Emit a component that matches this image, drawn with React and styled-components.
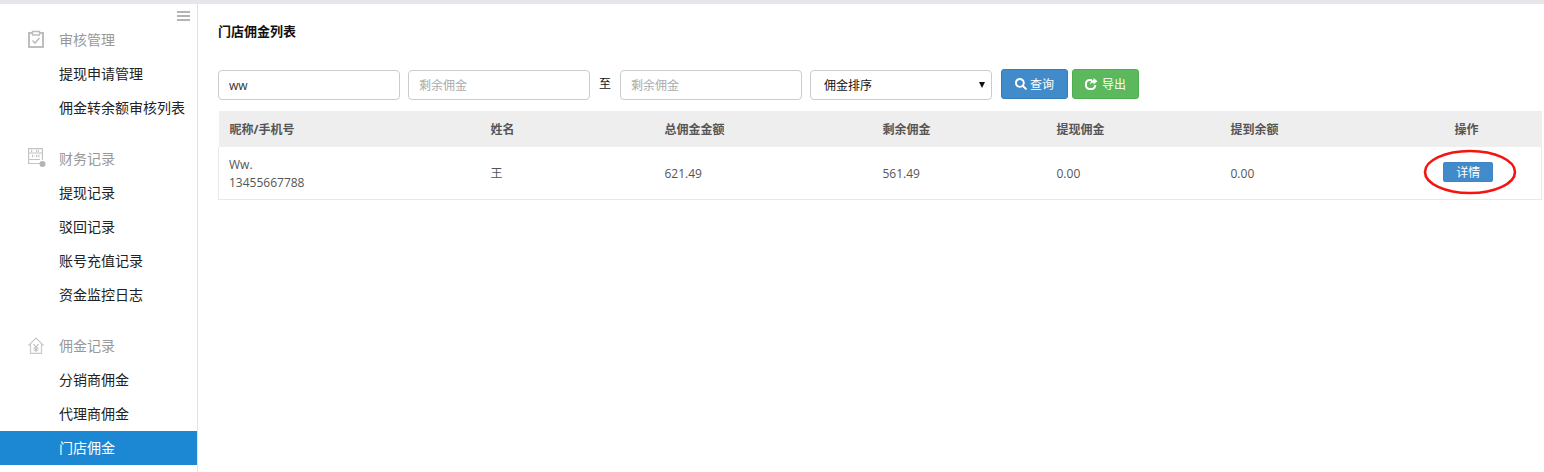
import React from 'react';
import styled, { createGlobalStyle } from 'styled-components';
import { FaSearch } from 'react-icons/fa';

const fontStack = `"Open Sans", "Noto Sans CJK SC", sans-serif`;

const GlobalStyle = createGlobalStyle`
  * { box-sizing: border-box; }
  html, body { margin: 0; padding: 0; background: #fff; }
  body { font-family: ${fontStack}; color: #000; }
`;

const Page = styled.div`
  width: 1544px;
  height: 472px;
  overflow: hidden;
  border-top: 4px solid #e7e7eb;
  display: flex;
`;

const Sidebar = styled.aside`
  width: 198px;
  flex: none;
  padding-top: 19px;
  border-right: 1px solid #e3e3e3;
  position: relative;
`;

const Burger = styled.div`
  position: absolute;
  top: 7px;
  right: 7px;
  width: 13px;
  height: 10px;
  border-top: 2px solid #b3b3b3;
  border-bottom: 2px solid #b3b3b3;
  &::after {
    content: '';
    display: block;
    height: 2px;
    margin-top: 2px;
    background: #b3b3b3;
  }
`;

const Group = styled.div`
  margin-bottom: 17px;
`;

const GroupHead = styled.div`
  height: 34px;
  padding-bottom: 2px;
  display: flex;
  align-items: center;
  font-size: 14px;
  color: #999;
`;

const IconSlot = styled.span`
  width: 59px;
  flex: none;
  padding-left: 28px;
  display: flex;
  align-items: center;
`;

const MenuItem = styled.div`
  height: 34px;
  line-height: 34px;
  padding-left: 59px;
  font-size: 14px;
  color: ${(p) => (p.$active ? '#fff' : '#222')};
  background: ${(p) => (p.$active ? '#1c88d4' : 'transparent')};
`;

const Main = styled.main`
  flex: 1;
  min-width: 0;
  padding: 0 2px 0 20px;
`;

const Title = styled.h1`
  margin: 0;
  padding-top: 18px;
  height: 65px;
  font-size: 13px;
  line-height: 18px;
  font-weight: 700;
  color: #111;
`;

const Toolbar = styled.div`
  display: flex;
  align-items: flex-start;
  height: 32px;
  margin-bottom: 10px;
`;

const Input = styled.input`
  width: 182px;
  height: 30px;
  margin-top: 1px;
  margin-right: 8px;
  padding: 0 10px;
  border: 1px solid #ccc;
  border-radius: 4px;
  outline: none;
  font-family: ${fontStack};
  font-size: 12px;
  color: #333;
  &::placeholder { color: #aaa; opacity: 1; }
`;

const To = styled.span`
  width: 22px;
  margin-left: 1px;
  margin-right: -1px;
  line-height: 30px;
  font-size: 12px;
  color: #111;
`;

const SelectWrap = styled.div`
  position: relative;
  width: 182px;
  height: 30px;
  margin-top: 1px;
  margin-right: 9px;
  &::after {
    content: '';
    position: absolute;
    top: 12px;
    right: 7px;
    border-left: 3.5px solid transparent;
    border-right: 3.5px solid transparent;
    border-top: 6px solid #111;
    pointer-events: none;
  }
`;

const Select = styled.select`
  appearance: none;
  display: block;
  width: 100%;
  height: 100%;
  padding: 0 13px;
  border: 1px solid #ccc;
  border-radius: 4px;
  outline: none;
  background: #fff;
  font-family: ${fontStack};
  font-size: 12px;
  color: #111;
`;

const Button = styled.button`
  width: 67px;
  height: 30px;
  margin-right: 4px;
  padding: 0;
  display: inline-flex;
  align-items: center;
  justify-content: center;
  gap: ${(p) => p.$gap}px;
  border: 1px solid ${(p) => p.$border};
  border-radius: 3px;
  background: ${(p) => p.$bg};
  color: #fff;
  font-family: ${fontStack};
  font-size: 12px;
`;

const Table = styled.table`
  width: 1323px;
  table-layout: fixed;
  border-collapse: collapse;
  font-size: 12px;
  color: #555;
`;

const Th = styled.th`
  width: ${(p) => p.$w}px;
  height: 36px;
  padding: 0 ${(p) => (p.$center ? 13 : 11)}px 0 11px;
  background: #eee;
  font-weight: 700;
  text-align: ${(p) => (p.$center ? 'center' : 'left')};
  color: #555;
`;

const Td = styled.td`
  height: 52px;
  padding: 2px 11px 0;
  line-height: 18px;
  border-bottom: 1px solid #e8e8e8;
  text-align: ${(p) => (p.$center ? 'center' : 'left')};
  &:first-child { border-left: 1px solid #e8e8e8; padding-left: 10px; }
  &:last-child { border-right: 1px solid #e8e8e8; padding-top: 0; }
`;

const ActionWrap = styled.div`
  position: relative;
  display: inline-block;
  vertical-align: middle;
  margin-left: 2px;
  margin-top: -1px;
`;

const DetailButton = styled.button`
  display: block;
  width: 50px;
  height: 20px;
  padding: 0;
  border: 1px solid #3f86c4;
  border-radius: 2px;
  background: #428bca;
  color: #fff;
  font-family: ${fontStack};
  font-size: 12px;
`;

const Ring = styled.svg`
  position: absolute;
  left: -20px;
  top: -13px;
  pointer-events: none;
`;

const ClipboardIcon = () => (
  <svg width="16" height="18" viewBox="0 0 16 18" fill="none" stroke="#bdbdbd">
    <path d="M4.5 3H1v14h14V3h-3.5" strokeWidth="2" />
    <path d="M4.5 1.5h7V5h-7z" fill="#fff" strokeWidth="1.4" />
    <path d="M4.5 10.5l2.5 2.5 4.5-5" strokeWidth="1.6" />
  </svg>
);

const AbacusIcon = () => (
  <svg width="18" height="20" viewBox="0 0 18 20" fill="none" stroke="#c4c4c4" strokeWidth="1.2">
    <path d="M12 15.5H0.6V0.6h13.8V12" />
    <path d="M1 5h13M1 11.5h11" />
    <path d="M3 3h2M8 3h3M4 8h2.5M8 8h4" strokeWidth="2.4" strokeDasharray="1.2 1" />
    <circle cx="14.5" cy="16" r="3" fill="#b4b4b4" stroke="none" />
  </svg>
);

const HouseIcon = () => (
  <svg width="16" height="17" viewBox="0 0 16 17" fill="none" stroke="#c8c8c8" strokeWidth="1.2">
    <path d="M0.5 8.5L8 1l7.5 7.5M2.5 7v9.4h11V7" />
    <path d="M5.5 7L8 10l2.5-3M8 10v5M5.5 11h5M5.5 13h5" strokeWidth="1.1" stroke="#b8b8b8" />
  </svg>
);

const ExportIcon = () => (
  <svg width="13" height="12" viewBox="0 0 13 12" fill="none">
    <path d="M7 2H4.6A3.6 3.6 0 0 0 1 5.6v1.8A3.6 3.6 0 0 0 4.6 11h2A3.6 3.6 0 0 0 10.2 7.4V7" stroke="#fff" strokeWidth="2" />
    <path d="M8.5 0l4 3.2-4 3.2V4.8C6.8 4.8 5.6 5.4 5 6.8 5 4.2 6.4 2.2 8.5 2z" fill="#fff" />
  </svg>
);

const columns = [
  { label: '昵称/手机号', w: 261 },
  { label: '姓名', w: 174 },
  { label: '总佣金金额', w: 218 },
  { label: '剩余佣金', w: 174 },
  { label: '提现佣金', w: 174 },
  { label: '提到余额', w: 174 },
  { label: '操作', w: 148, center: true },
];

const menu = [
  { head: '审核管理', Icon: ClipboardIcon, items: ['提现申请管理', '佣金转余额审核列表'] },
  { head: '财务记录', Icon: AbacusIcon, items: ['提现记录', '驳回记录', '账号充值记录', '资金监控日志'] },
  { head: '佣金记录', Icon: HouseIcon, items: ['分销商佣金', '代理商佣金', '门店佣金'] },
];

export default function App() {
  return (
    <>
      <GlobalStyle />
      <Page>
        <Sidebar>
          <Burger />
          {menu.map(({ head, Icon, items }) => (
            <Group key={head}>
              <GroupHead>
                <IconSlot>
                  <Icon />
                </IconSlot>
                {head}
              </GroupHead>
              {items.map((item) => (
                <MenuItem key={item} $active={item === '门店佣金'}>
                  {item}
                </MenuItem>
              ))}
            </Group>
          ))}
        </Sidebar>
        <Main>
          <Title>门店佣金列表</Title>
          <Toolbar>
            <Input defaultValue="ww" />
            <Input placeholder="剩余佣金" />
            <To>至</To>
            <Input placeholder="剩余佣金" />
            <SelectWrap>
              <Select defaultValue="">
                <option value="">佣金排序</option>
              </Select>
            </SelectWrap>
            <Button $bg="#428bca" $border="#357ebd" $gap={3}>
              <FaSearch size={12} />
              查询
            </Button>
            <Button $bg="#5cb85c" $border="#4cae4c" $gap={4}>
              <ExportIcon />
              导出
            </Button>
          </Toolbar>
          <Table>
            <thead>
              <tr>
                {columns.map((c) => (
                  <Th key={c.label} $w={c.w} $center={c.center}>
                    {c.label}
                  </Th>
                ))}
              </tr>
            </thead>
            <tbody>
              <tr>
                <Td>
                  Ww.
                  <br />
                  13455667788
                </Td>
                <Td>王</Td>
                <Td>621.49</Td>
                <Td>561.49</Td>
                <Td>0.00</Td>
                <Td>0.00</Td>
                <Td $center>
                  <ActionWrap>
                    <DetailButton>详情</DetailButton>
                    <Ring width="94" height="46" viewBox="0 0 94 46" fill="none">
                      <ellipse cx="47" cy="23" rx="45" ry="21" stroke="#f5140f" strokeWidth="2.6" />
                    </Ring>
                  </ActionWrap>
                </Td>
              </tr>
            </tbody>
          </Table>
        </Main>
      </Page>
    </>
  );
}
